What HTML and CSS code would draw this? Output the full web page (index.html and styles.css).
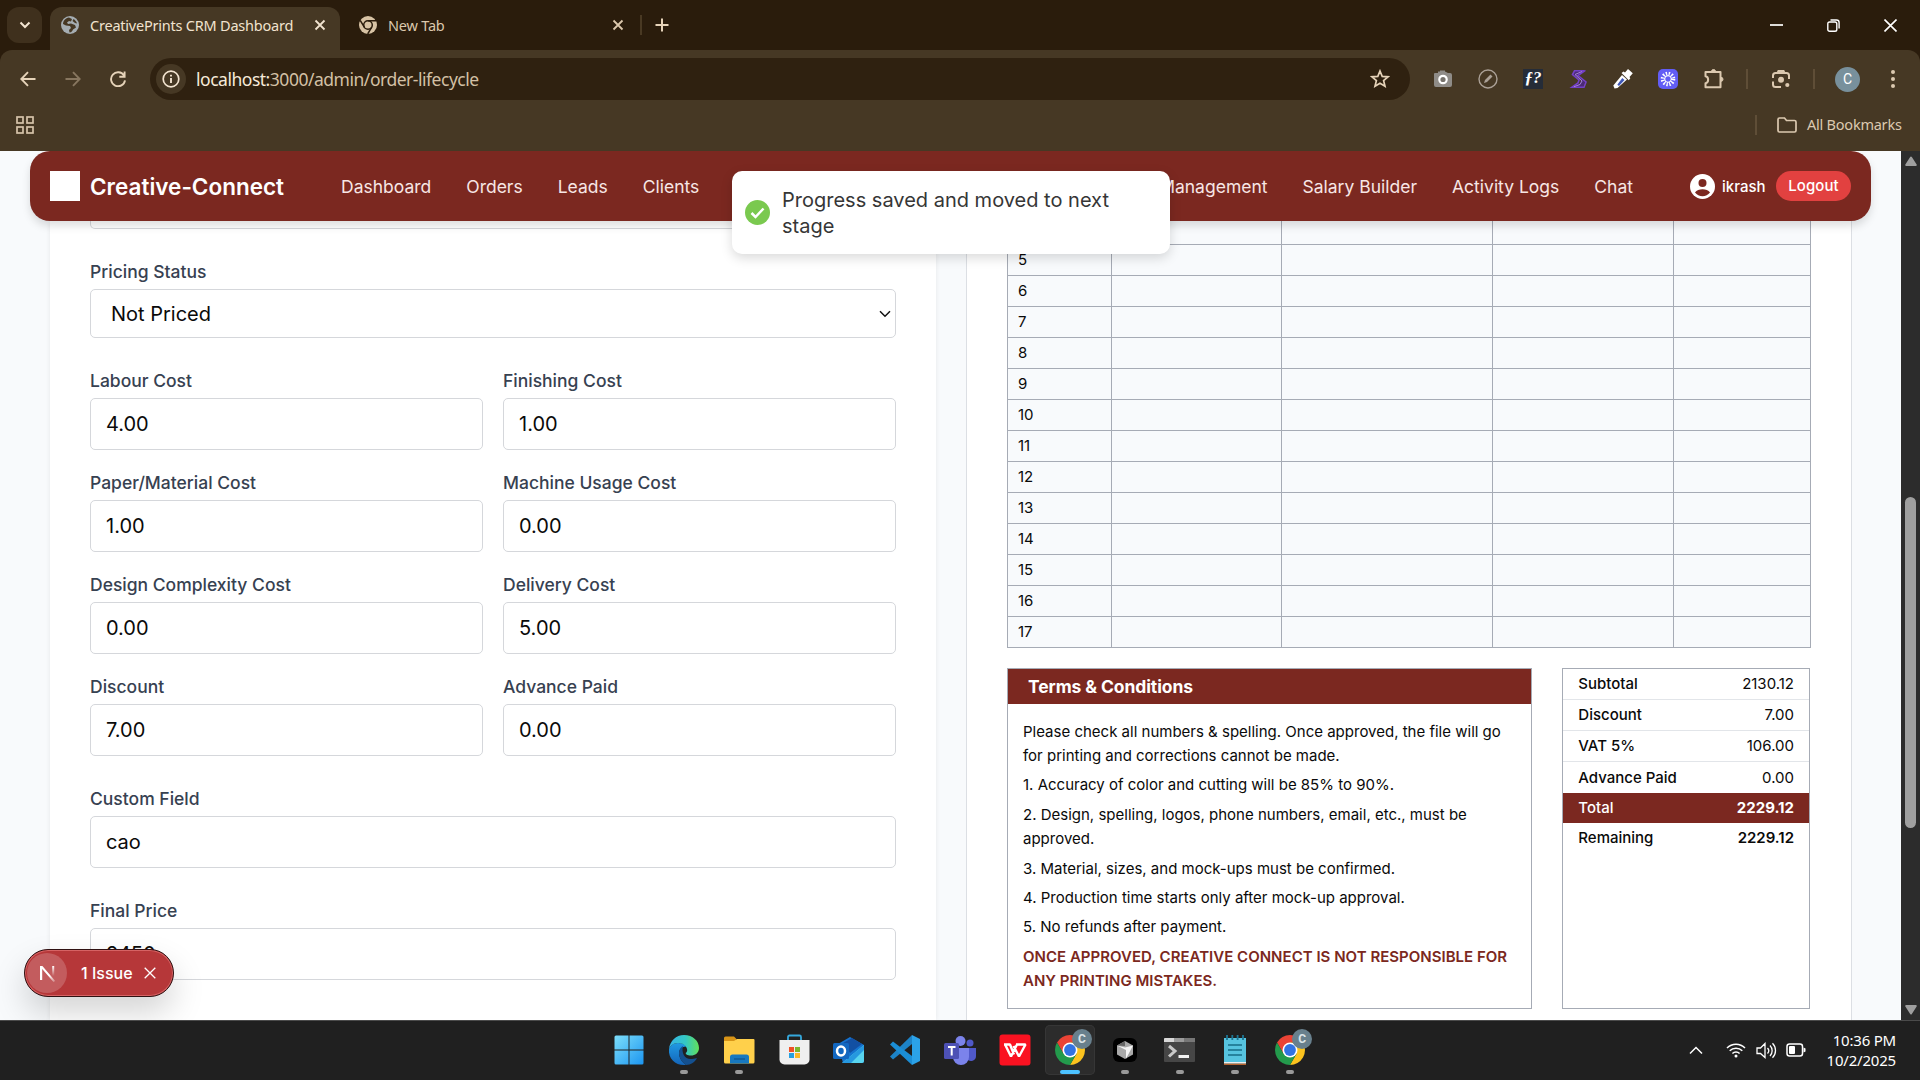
FILE: index.html
```html
<!DOCTYPE html>
<html lang="en">
<head>
<meta charset="utf-8">
<title>CreativePrints CRM Dashboard</title>
<link rel="stylesheet" href="styles.css">
</head>
<body>
<svg class="defs" width="0" height="0" aria-hidden="true">
  <symbol id="chrome-logo" viewBox="-15 -15 30 30">
    <path fill="#ea4335" d="M-12.99-7.5A15 15 0 0 1 12.99-7.5H0L-6.5 3.75Z"/>
    <path fill="#fcc31e" d="M12.99-7.5A15 15 0 0 1 0 15L6.5 3.75 0-7.5Z"/>
    <path fill="#239a4c" d="M0 15A15 15 0 0 1-12.99-7.5L-6.5 3.75H6.5Z"/>
    <circle r="7.5" fill="#fff"/><circle r="5.9" fill="#3273e3"/>
  </symbol>
  <symbol id="close" viewBox="0 0 12 12"><path d="M1.5 1.5l9 9M10.5 1.5l-9 9" fill="none" stroke="currentColor" stroke-width="1.8"/></symbol>
</svg>
<div class="screen">
  <div class="tabstrip">
    <div class="tab-search"><svg width="12" height="8" viewBox="0 0 12 8"><path d="M1.5 1.5L6 6l4.500-4.500" fill="none" stroke="#f3e4d0" stroke-width="2"/></svg></div>
    <div class="tab tab-active">
      <svg width="18" height="18" viewBox="0 0 18 18"><circle cx="9" cy="9" r="9" fill="#a5adb2"/><path d="M8 1.500c-3.500.5-6 3.500-6 6.500l3 1.500 4 .5 1 2-2 2 .5 2.500c2 0 3-1.500 3.500-3l3-2-1-2.500-4-1.500-3 .5-1-1.500 2-1.500 2 .5 1-2.500zM12.500 3l-1 2 2.500 2 2 .5C15.500 5.500 14 4 12.500 3z" fill="#463824"/></svg>
      <span class="tab-title">CreativePrints CRM Dashboard</span>
      <svg class="tab-x" width="12" height="12"><use href="#close"/></svg>
    </div>
    <div class="tab tab-idle">
      <svg width="18" height="18" viewBox="-9 -9 18 18"><circle r="9" fill="#d8c3a5"/><circle r="4.300" fill="none" stroke="#2a1c0c" stroke-width="1.500"/><path d="M0-4.300H8M3.700 2.200L-.3 9M-3.700 2.200L-7.800-4.700" stroke="#2a1c0c" stroke-width="1.500"/></svg>
      <span class="tab-title">New Tab</span>
      <svg class="tab-x" width="12" height="12"><use href="#close"/></svg>
    </div>
    <i class="tab-div"></i>
    <svg class="tab-plus" width="14" height="14" viewBox="0 0 14 14"><path d="M7 .5v13M.5 7h13" stroke="#e6d3b9" stroke-width="2"/></svg>
    <div class="win-btns">
      <svg width="13" height="13" viewBox="0 0 13 13"><path d="M0 6h13" stroke="#fff" stroke-width="1.700"/></svg>
      <svg width="13" height="13" viewBox="0 0 13 13" fill="none" stroke="#fff" stroke-width="1.400"><rect x=".8" y="3" width="9" height="9.200" rx="1.800"/><path d="M3.500 1h6a2.600 2.600 0 0 1 2.600 2.600v6"/></svg>
      <svg width="13" height="13" viewBox="0 0 13 13"><path d="M.5.5l12 12M12.500.5l-12 12" stroke="#fff" stroke-width="1.600"/></svg>
    </div>
  </div>

  <div class="toolbar">
    <svg class="nav-ico" width="16" height="16" viewBox="0 0 16 16" fill="none" stroke="#e6d3b9" stroke-width="1.900"><path d="M15.500 8H1.500M8 1.200L1.300 8 8 14.800"/></svg>
    <svg class="nav-ico" width="16" height="16" viewBox="0 0 16 16" fill="none" stroke="#87765f" stroke-width="1.900"><path d="M.5 8h14M8 1.200L14.700 8 8 14.800"/></svg>
    <svg class="nav-ico" width="16" height="16" viewBox="0 0 16 16" fill="none" stroke="#e6d3b9" stroke-width="1.900"><path d="M14 4.500A7 7 0 1 0 15 9.300M14.600.5v5.200H9.300"/></svg>
    <div class="omnibox">
      <span class="site-info"><svg width="18" height="18" viewBox="0 0 18 18"><circle cx="9" cy="9" r="7.800" fill="none" stroke="#f3e4d0" stroke-width="1.700"/><path d="M9 8v5M9 4.700v1.900" stroke="#f3e4d0" stroke-width="1.900"/></svg></span>
      <span class="url"><b>localhost:</b>3000/admin/order-lifecycle</span>
      <svg class="star" width="20" height="20" viewBox="0 0 20 20"><path d="M10 2l2.200 5.400 5.800.4-4.400 3.800 1.400 5.700L10 14.200l-5 3.100 1.400-5.700L2 7.800l5.800-.4z" fill="none" stroke="#e6d3b9" stroke-width="1.700"/></svg>
    </div>
    <div class="exts">
      <svg width="20" height="20" viewBox="0 0 20 20"><path d="M2 4h3V2.500h2V1.500h5v1l3 1.500h2a2 2 0 0 1 2 2V16a2 2 0 0 1-2 2H3a2 2 0 0 1-2-2V5a1 1 0 0 1 1-1z" fill="#8f8c88"/><circle cx="10" cy="10.500" r="3.700" fill="#77736d" stroke="#fff" stroke-width="2.200"/></svg>
      <svg width="20" height="20" viewBox="0 0 20 20"><circle cx="10" cy="10" r="9" fill="none" stroke="#aaa096" stroke-width="1.400"/><path d="M6 14l1-3 5.500-5.500 2 2L9 13z" fill="#aaa096"/></svg>
      <span class="fx">ƒ?</span>
      <svg width="20" height="20" viewBox="0 0 20 20" fill="none"><path d="M16.500 2H7L5 5l8 6-1 3-7 4h10l2-5-7-6z" fill="#4a2a78"/><path d="M16 1.800H6.500L4.500 5.500 11 11l-1 3-6 4.200h12L18 13 10 6.500 16.500 2z" stroke="#7440c8" stroke-width="1.600"/><path d="M14 2.500L7 5.500l7 6.500-2 3.500-6 2.200" stroke="#a884d8" stroke-width="1"/></svg>
      <svg width="20" height="20" viewBox="0 0 20 20"><path d="M1.500 19.500l-1.200-3L9 6l5 4.500L4.500 19z" fill="#fff"/><path d="M4.300 15.700L9.300 9l2.200 2-5.500 6z" fill="#4058b8"/><path d="M8.500 4l2-1.500 1.500 1 3-3.500L19.800 4.300 16.500 8l.8 1.200-1.500 2z" fill="#fff"/></svg>
      <svg width="20" height="20" viewBox="-10 -10 20 20"><rect x="-10" y="-10" width="20" height="20" rx="5" fill="#625df5"/><circle r="5.200" fill="none" stroke="#fff" stroke-width="4.200" stroke-dasharray="1.300 1.423"/><circle r="3.300" fill="none" stroke="#fff" stroke-width="1"/></svg>
      <svg width="22" height="22" viewBox="0 0 22 22" fill="none" stroke="#dcc9b0" stroke-width="2"><path d="M2.500 4H17.500v15.200H2.500v-4c3.500-.5 3.500-6.500 0-7z" stroke-linejoin="round"/><path d="M8.500 3.500a2 2 0 0 1 4 0zM18 9.300a2 2 0 0 1 0 4z" fill="#dcc9b0" stroke-width="1"/></svg>
    </div>
    <i class="bar-div"></i>
    <svg class="lens" width="20" height="20" viewBox="0 0 20 20" fill="none" stroke="#dcc9b0" stroke-width="2"><path d="M2 9V6.500A2.500 2.500 0 0 1 4.500 4H15.500A2.500 2.500 0 0 1 18 6.500V10M2 12.500v3A2.500 2.500 0 0 0 4.500 18H10M6.500 3l1-1h5l1 1"/><circle cx="10" cy="10.800" r="3" fill="#dcc9b0" stroke="none"/><circle cx="16.300" cy="16" r="2.100" fill="#dcc9b0" stroke="none"/></svg>
    <i class="bar-div bar-div2"></i>
    <span class="avatar">C</span>
    <svg class="dots" width="4" height="18" viewBox="0 0 4 18" fill="#dcc9b0"><circle cx="2" cy="2" r="2"/><circle cx="2" cy="9" r="2"/><circle cx="2" cy="16" r="2"/></svg>
  </div>

  <div class="bookmarks">
    <svg width="18" height="18" viewBox="0 0 18 18" fill="none" stroke="#d6c3aa" stroke-width="1.700"><rect x="1" y="1" width="6" height="6"/><rect x="11" y="1" width="6" height="6"/><rect x="1" y="11" width="6" height="6"/><rect x="11" y="11" width="6" height="6"/></svg>
    <i class="bar-div bm-div"></i>
    <svg class="folder" width="20" height="16" viewBox="0 0 20 16"><path d="M1 2.500A1.500 1.500 0 0 1 2.500 1H7.500l2 2.500h8A1.500 1.500 0 0 1 19 5v8.500a1.500 1.500 0 0 1-1.500 1.500h-15A1.500 1.500 0 0 1 1 13.500z" fill="none" stroke="#dcc9b0" stroke-width="1.700"/></svg>
    <span class="bm-text">All Bookmarks</span>
  </div>

  <div class="viewport">
    <div class="page">
      <header class="navbar">
        <span class="logo-box"></span>
        <span class="brand">Creative-Connect</span>
        <nav class="links"><a>Dashboard</a><a>Orders</a><a>Leads</a><a>Clients</a></nav>
        <nav class="links links-end"><a>Management</a><a>Salary Builder</a><a>Activity Logs</a><a>Chat</a></nav>
        <svg class="user-ico" width="25" height="25" viewBox="0 0 25 25"><circle cx="12.500" cy="12.500" r="12.500" fill="#fff"/><circle cx="12.500" cy="9" r="4" fill="#7b2820"/><path d="M5 18.500c1.500-2.300 4.500-3.300 7.500-3.300s6 1 7.500 3.300a9.500 9.500 0 0 1-15 0z" fill="#7b2820"/></svg>
        <span class="user">ikrash</span>
        <span class="logout">Logout</span>
      </header>

      <main class="columns">
        <section class="form-card">
          <div class="input cut"></div>
          <div class="field status"><label>Pricing Status</label><div class="input select">Not Priced<svg width="12" height="8" viewBox="0 0 12 8"><path d="M1 1.200l5 5 5-5" fill="none" stroke="#111" stroke-width="1.500"/></svg></div></div>
          <div class="costs">
            <div class="field"><label>Labour Cost</label><div class="input">4.00</div></div>
            <div class="field"><label>Finishing Cost</label><div class="input">1.00</div></div>
            <div class="field"><label>Paper/Material Cost</label><div class="input">1.00</div></div>
            <div class="field"><label>Machine Usage Cost</label><div class="input">0.00</div></div>
            <div class="field"><label>Design Complexity Cost</label><div class="input">0.00</div></div>
            <div class="field"><label>Delivery Cost</label><div class="input">5.00</div></div>
            <div class="field"><label>Discount</label><div class="input">7.00</div></div>
            <div class="field"><label>Advance Paid</label><div class="input">0.00</div></div>
          </div>
          <div class="field wide"><label>Custom Field</label><div class="input">cao</div></div>
          <div class="field wide"><label>Final Price</label><div class="input">2450</div></div>
        </section>

        <section class="quote-card">
          <table class="items">
            <colgroup><col class="c1"><col class="c2"><col class="c3"><col class="c4"><col class="c5"></colgroup>
            <tr class="partial"><td></td><td></td><td></td><td></td><td></td></tr>
            <tr><td>5</td><td></td><td></td><td></td><td></td></tr>
            <tr><td>6</td><td></td><td></td><td></td><td></td></tr>
            <tr><td>7</td><td></td><td></td><td></td><td></td></tr>
            <tr><td>8</td><td></td><td></td><td></td><td></td></tr>
            <tr><td>9</td><td></td><td></td><td></td><td></td></tr>
            <tr><td>10</td><td></td><td></td><td></td><td></td></tr>
            <tr><td>11</td><td></td><td></td><td></td><td></td></tr>
            <tr><td>12</td><td></td><td></td><td></td><td></td></tr>
            <tr><td>13</td><td></td><td></td><td></td><td></td></tr>
            <tr><td>14</td><td></td><td></td><td></td><td></td></tr>
            <tr><td>15</td><td></td><td></td><td></td><td></td></tr>
            <tr><td>16</td><td></td><td></td><td></td><td></td></tr>
            <tr><td>17</td><td></td><td></td><td></td><td></td></tr>
          </table>
          <div class="bottom">
            <div class="terms">
              <h3>Terms &amp; Conditions</h3>
              <div class="terms-body">
                <p>Please check all numbers &amp; spelling. Once approved, the file will go<br>for printing and corrections cannot be made.</p>
                <p>1. Accuracy of color and cutting will be 85% to 90%.</p>
                <p>2. Design, spelling, logos, phone numbers, email, etc., must be<br>approved.</p>
                <p>3. Material, sizes, and mock-ups must be confirmed.</p>
                <p>4. Production time starts only after mock-up approval.</p>
                <p>5. No refunds after payment.</p>
                <p class="warn">ONCE APPROVED, CREATIVE CONNECT IS NOT RESPONSIBLE FOR<br>ANY PRINTING MISTAKES.</p>
              </div>
            </div>
            <div class="totals">
              <div class="trow"><b>Subtotal</b><span>2130.12</span></div>
              <div class="trow"><b>Discount</b><span>7.00</span></div>
              <div class="trow"><b>VAT 5%</b><span>106.00</span></div>
              <div class="trow last"><b>Advance Paid</b><span>0.00</span></div>
              <div class="trow total"><b>Total</b><strong>2229.12</strong></div>
              <div class="trow remain"><b>Remaining</b><strong>2229.12</strong></div>
            </div>
          </div>
        </section>
      </main>

      <div class="toast">
        <svg width="25" height="25" viewBox="0 0 25 25"><circle cx="12.500" cy="12.500" r="12.500" fill="#7ac94f"/><path d="M6.500 13l4 4 8-8.500" fill="none" stroke="#fff" stroke-width="2.500"/></svg>
        <span>Progress saved and moved to next<br>stage</span>
      </div>
      <div class="issue">
        <span class="issue-n"><svg width="16" height="17" viewBox="0 0 16 17"><defs><linearGradient id="ng" x1="0" y1="0" x2="1" y2="1"><stop offset=".6" stop-color="#fff"/><stop offset="1" stop-color="#fff" stop-opacity=".2"/></linearGradient><linearGradient id="nv" x1="0" y1="0" x2="0" y2="1"><stop offset="0" stop-color="#fff"/><stop offset="1" stop-color="#fff" stop-opacity="0"/></linearGradient></defs><path d="M0 15V1h2.400L15.200 16l-1.700 1L2.200 4V15z" fill="url(#ng)"/><path d="M12.200 1h2v10h-2z" fill="url(#nv)"/></svg></span>
        <span class="issue-text">1 Issue</span>
        <svg width="12" height="12" viewBox="0 0 12 12"><path d="M.7.7l10.600 10.600M11.300.7L.7 11.300" stroke="#fff" stroke-width="1.300"/></svg>
      </div>
    </div>
    <div class="scrollbar">
      <svg width="12" height="11" viewBox="0 0 12 11"><path d="M6 1.500l4.800 7.500H1.200z" fill="#9f9f9f" stroke="#9f9f9f" stroke-width="2" stroke-linejoin="round"/></svg>
      <i class="thumb"></i>
      <svg width="12" height="11" viewBox="0 0 12 11"><path d="M6 9.500L1.200 2h9.600z" fill="#9f9f9f" stroke="#9f9f9f" stroke-width="2" stroke-linejoin="round"/></svg>
    </div>
  </div>

  <footer class="taskbar">
    <div class="apps">
      <span class="app"><svg width="30" height="30" viewBox="0 0 30 30"><defs><linearGradient id="win" gradientUnits="userSpaceOnUse" x1="0" y1="0" x2="30" y2="30"><stop offset="0" stop-color="#7fe0fb"/><stop offset="1" stop-color="#1a94f0"/></linearGradient></defs><path fill="url(#win)" d="M2 .5h12.500v14H.5V2A1.500 1.500 0 0 1 2 .5zM15.500.5H28A1.500 1.500 0 0 1 29.500 2v12.500h-14zM.5 15.500h14v14H2A1.500 1.500 0 0 1 .5 28zM15.500 15.500h14V28a1.500 1.500 0 0 1-1.500 1.500H15.500z"/></svg></span>
      <span class="app open"><svg width="32" height="32" viewBox="0 0 32 32"><defs><linearGradient id="e1"><stop offset="0" stop-color="#35b4e8"/><stop offset=".55" stop-color="#34c7c4"/><stop offset="1" stop-color="#62e05a"/></linearGradient><linearGradient id="e2" x1="0" y1="0" x2="0" y2="1"><stop offset="0" stop-color="#1f9ae4"/><stop offset="1" stop-color="#1464b8"/></linearGradient></defs><path fill="url(#e2)" d="M1 15C2 12 5.500 9 10 9c4 0 7 1.500 8 3.500-4 0-7 3-7 6.500 0 5 3 9 7 12C8 32 0 25 1 15z"/><path fill="#14508f" d="M11 19c0-4 2-6 4-7-2 7 2 14 9 13 2 0 4-1 5-1-2 4-6 7-11 7-4-3-7-7-7-12z"/><path fill="url(#e1)" d="M1 15C2 7 8 1 16 1c9 0 15 6 15 13 0 5-4 7.500-8 7.500s-5.300-1.500-5.300-2.500c1.300-.7 1.800-2.300 1.300-4-1-4-5-6-9-6-4.500 0-8 3-9 6z"/></svg></span>
      <span class="app open"><svg width="32" height="30" viewBox="0 0 32 30"><path d="M1 3a1.500 1.500 0 0 1 1.500-1.500H11L13.500 4v4H1z" fill="#d99517"/><path d="M1 6h10l3-2h16.500a1 1 0 0 1 1 1v22a1.500 1.500 0 0 1-1.500 1.500H2.500A1.500 1.500 0 0 1 1 27z" fill="#ffd04b"/><path d="M7 28.500V22a2.500 2.500 0 0 1 2.500-2.500h14A2.500 2.500 0 0 1 26 22v6.500z" fill="#1778bf"/><path d="M11 24h11" stroke="#0f5690" stroke-width="1.300"/></svg></span>
      <span class="app"><svg width="32" height="32" viewBox="0 0 32 32"><path d="M10 7V3a1.500 1.500 0 0 1 1.500-1.500h10A1.500 1.500 0 0 1 23 3v4" fill="none" stroke="#35a8dc" stroke-width="1.800"/><path d="M1.500 6h30v19.500a5 5 0 0 1-5 5h-20a5 5 0 0 1-5-5z" fill="#efefef"/><path d="M11 13h5v5h-5z" fill="#ef5126"/><path d="M17 13h5v5h-5z" fill="#7db72d"/><path d="M11 19h5v5h-5z" fill="#26a0e0"/><path d="M17 19h5v5h-5z" fill="#fbb928"/></svg></span>
      <span class="app"><svg width="32" height="32" viewBox="0 0 32 32"><path d="M5 10L17 3l14 8v16a2 2 0 0 1-2 2H10z" fill="#1573cf"/><path d="M10 9l9-5 10 6-12 9z" fill="#1250a3"/><path d="M31 11v16a2 2 0 0 1-2 2H9z" fill="#58d4ef"/><path d="M14 25l17-14v5L18 29H9z" fill="#2698df"/><rect y="9" width="16" height="16" rx="1.500" fill="#1267c0"/><ellipse cx="8" cy="17" rx="4" ry="4.500" fill="none" stroke="#fff" stroke-width="2.500"/></svg></span>
      <span class="app"><svg width="32" height="32" viewBox="0 0 32 32"><path d="M23 1v9L4 25.500l-3-3z" fill="#1d83c7"/><path d="M23 31v-9L4 7.500l-3 3z" fill="#1b8ed6"/><path d="M23 1l8 4v22l-8 4z" fill="#2ba2e8"/></svg></span>
      <span class="app"><svg width="32" height="32" viewBox="0 0 32 32"><circle cx="26" cy="9" r="3.500" fill="#5059c9"/><path d="M23 14h9v8a5 5 0 0 1-9 3z" fill="#5059c9"/><circle cx="16.500" cy="7" r="5" fill="#7b83eb"/><path d="M9 14h16v9a7.500 7.500 0 0 1-16 0z" fill="#7b83eb"/><rect y="9" width="15" height="16" rx="1.500" fill="#4d51b5"/><path d="M4 13h7.500M7.700 13v8.500" stroke="#fff" stroke-width="2"/></svg></span>
      <span class="app"><svg width="32" height="32" viewBox="0 0 32 32"><rect x=".5" y=".5" width="31" height="31" rx="3" fill="#fa1221"/><path d="M5 10.500h6L15 20.500M17 10.500h9.500L20 22.500 14.500 12M6.300 11L12 22.500 17.700 11" fill="none" stroke="#fff" stroke-width="2.400" stroke-linejoin="bevel"/></svg></span>
      <span class="app current"><svg width="30" height="30"><use href="#chrome-logo"/></svg><em>C</em></span>
      <span class="app open"><svg width="24" height="24" viewBox="0 0 24 24"><rect width="24" height="24" rx="6" fill="#000"/><path d="M12 3l8 4.500v9L12 21l-8-4.500v-9z" fill="#aaa"/><path d="M4 7.500l8 2 8-2-7 13.200V12z" fill="#f5f5f5"/><path d="M12 3v5L4 7.500z" fill="#666"/></svg></span>
      <span class="app open"><svg width="31" height="24" viewBox="0 0 31 24"><rect width="31" height="24" rx="1" fill="#464646"/><path d="M0 1a1 1 0 0 1 1-1h9v4H0z" fill="#d8d8d8"/><path d="M10 0h10v4H10z" fill="#9b9b9b"/><path d="M20 0h11v4H20z" fill="#777"/><path d="M5 8l6 5-6 5.500" fill="none" stroke="#c9c9c9" stroke-width="3"/><path d="M14.500 18.500H25" stroke="#f2f2f2" stroke-width="3"/></svg></span>
      <span class="app open"><svg width="24" height="32" viewBox="0 0 24 32"><path d="M1 4h22v26H1z" fill="#56c4e0"/><path d="M1 28h22v1.500H1z" fill="#eee"/><path d="M1 29.500h22V31H1z" fill="#b5622f"/><path d="M4 1v5M9.300 1v5M14.600 1v5M20 1v5" stroke="#1d7795" stroke-width="1.800"/><path d="M5 11h14M5 16h14M5 21h14" stroke="#176d88" stroke-width="1.700"/></svg></span>
      <span class="app open"><svg width="30" height="30"><use href="#chrome-logo"/></svg><em>C</em></span>
    </div>
    <div class="tray">
      <svg width="14" height="9" viewBox="0 0 14 9"><path d="M1 7.500l6-6 6 6" fill="none" stroke="#fff" stroke-width="1.500"/></svg>
      <svg class="wifi" width="20" height="16" viewBox="0 0 20 16" fill="none" stroke="#fff" stroke-width="1.500"><path d="M1 6a12.500 12.500 0 0 1 18 0M3.700 8.800a8.800 8.800 0 0 1 12.600 0M6.400 11.500a5 5 0 0 1 7.200 0"/><circle cx="10" cy="14" r="1.500" fill="#fff" stroke="none"/></svg>
      <svg class="vol" width="21" height="17" viewBox="0 0 21 17" fill="none" stroke="#fff" stroke-width="1.300"><path d="M1 6h3.500L9 1.500v14L4.500 11.500H1zM11.500 6a4 4 0 0 1 0 5.500M14 3.500a7.500 7.500 0 0 1 0 10.500M16.500 1.200c4 4 4 10.600 0 14.600"/></svg>
      <svg class="bat" width="20" height="14" viewBox="0 0 20 14"><rect x="1" y="1" width="15.500" height="12" rx="2.500" fill="none" stroke="#fff" stroke-width="1.500"/><rect x="3" y="3" width="6" height="8" rx="1" fill="#fff"/><path d="M17.500 4.500l2 1v3l-2 1z" fill="#fff"/></svg>
      <div class="clock">10:36 PM<br>10/2/2025</div>
    </div>
  </footer>
</div>
</body>
</html>
```
FILE: styles.css
```css
* { box-sizing: border-box; }
body { margin: 0; font-family: Inter, "Liberation Sans", sans-serif; }
.defs { display: block; position: absolute; }
svg { flex: none; }
.screen { width: 1920px; height: 1080px; display: flex; flex-direction: column; overflow: hidden; background: #2a1c0c; }

/* Browser frame */
.tabstrip { height: 50px; display: flex; align-items: center; background: #2a1c0c; color: #f1e3cf; font: 15px "Noto Sans", sans-serif; }
.tab-search { width: 35px; height: 36px; margin: 0 8px 0 7px; border-radius: 12px; background: #3f301d; display: flex; align-items: center; justify-content: center; }
.tab { display: flex; align-items: center; white-space: nowrap; }
.tab-active { width: 290px; height: 43px; align-self: flex-end; padding: 0 14px 7px 11px; border-radius: 12px 12px 0 0; background: #463824; }
.tab-title { margin-left: 11px; font-size: 14.500px; letter-spacing: -0.22px; }
.tab-x { margin-left: auto; }
.tab-idle { width: 285px; padding: 0 1px 0 19px; color: #dcc8ad; }
.tab-div { width: 2px; height: 20px; margin-left: 15px; background: #493923; }
.tab-plus { margin-left: 13px; }
.win-btns { margin-left: auto; padding-right: 23px; display: flex; gap: 44px; }

.toolbar { height: 58px; display: flex; align-items: center; padding-left: 20px; background: #463824; border-radius: 12px 12px 0 0; }
.nav-ico { margin-right: 29px; }
.omnibox { width: 1260px; height: 42px; margin-left: -5px; border-radius: 21px; background: #2f2110; display: flex; align-items: center; padding: 0 20px 0 6px; }
.site-info { width: 30px; height: 30px; border-radius: 15px; background: #463824; display: flex; align-items: center; justify-content: center; }
.url { margin-left: 10px; font: 17.500px "Noto Sans", sans-serif; letter-spacing: -0.48px; color: #d3c0a5; }
.url b { font-weight: 400; color: #f6ead9; }
.star { margin-left: auto; }
.exts { display: flex; align-items: center; gap: 25px; margin-left: 23px; }
.fx { width: 20px; height: 20px; background: #252c38; color: #fff; font: italic bold 17px/18px "Liberation Serif", serif; text-align: center; }
.bar-div { width: 2px; height: 20px; margin-left: 21px; background: #5f4e37; }
.lens { margin-left: 23px; }
.bar-div2 { margin-left: 22px; }
.avatar { width: 25px; height: 25px; margin-left: 20px; border-radius: 50%; background: #78909c; color: #fff; font: 14px/25px Roboto, sans-serif; text-align: center; }
.dots { margin-left: 31px; }
.bookmarks { height: 43px; display: flex; align-items: center; padding: 0 18px 9px 16px; background: #463824; color: #dcc9b0; }
.bm-div { margin-left: auto; }
.folder { margin-left: 20px; }
.bm-text { width: 95px; margin: -2px 0 0 10px; font: 14.500px "Noto Sans", sans-serif; letter-spacing: -0.23px; white-space: nowrap; }

/* Web page */
.viewport { height: 869px; display: flex; background: #f8fafc; position: relative; }
.page { width: 1901px; position: relative; overflow: hidden; }
.navbar { position: relative; height: 70px; margin: 0 30px; padding: 0 20px; display: flex; align-items: center; border-radius: 20px; background: #7b2820; color: #fff; box-shadow: 0 5px 8px rgba(0,0,0,.13); }
.logo-box { width: 30px; height: 30px; background: #fff; }
.brand { width: 194px; margin-left: 10px; font-size: 22.500px; font-weight: 600; white-space: nowrap; }
.links { display: flex; gap: 35px; margin-left: 57px; font-size: 17.500px; color: #f7e6e5; }
.links-end { margin-left: auto; }
.user-ico { margin-left: 57px; }
.user { width: 44px; margin-left: 7px; font-size: 15px; font-weight: 500; }
.logout { width: 75px; height: 30px; margin-left: 10px; border-radius: 15px; background: #e24140; font-size: 15px; line-height: 30px; font-weight: 500; text-align: center; letter-spacing: .1px; }

.columns { height: 799px; display: flex; gap: 30px; padding-left: 50px; overflow: hidden; }
.form-card { width: 886px; padding: 0 40px; background: #fff; box-shadow: 0 0 5px rgba(0,0,0,.08); }
.input { height: 52px; padding: 0 15px; border: 1px solid #d5d7db; border-radius: 5px; display: flex; align-items: center; font-size: 20px; color: #0a0a0a; }
.input.cut { height: 8px; border-top: 0; border-radius: 0 0 5px 5px; }
.field label { display: block; height: 20px; margin-bottom: 7px; font-size: 17.500px; line-height: 20px; font-weight: 500; color: #374151; }
.status { margin-top: 33px; }
.select { height: 49px; padding: 0 4px 0 20px; justify-content: space-between; }
.costs { display: grid; grid-template-columns: 393px 393px; gap: 23px 20px; margin-top: 33px; }
.wide { margin-top: 33px; }

.quote-card { width: 886px; padding: 0 41px 0 40px; background: #fff; border: solid #dcdfe4; border-width: 0 1px; }
.items { width: 803px; border-collapse: collapse; table-layout: fixed; background: #f8fafc; font-size: 15px; color: #0a0a0a; }
.items td { height: 31px; padding: 0 0 0 10px; border: 1px solid #a6abb5; line-height: 20px; }
.items .partial td { height: 23px; border-top: 0; }
.c1 { width: 104px; } .c2 { width: 170px; } .c3 { width: 211px; } .c4 { width: 181px; } .c5 { width: 137px; }
.bottom { height: 341px; margin-top: 20px; display: flex; gap: 30px; }
.terms { width: 526px; border: 1px solid #a6abb5; }
.terms h3 { height: 35px; margin: 0; padding-left: 20px; background: #7b2820; color: #fff; font-size: 17.500px; line-height: 36px; font-weight: 700; letter-spacing: -.1px; }
.terms-body { padding: 16px 15px 0; font-size: 15px; line-height: 24.400px; color: #0a0a0a; white-space: nowrap; }
.terms-body p { margin: 0 0 5px; }
.terms-body .warn { font-weight: 600; color: #7b2820; letter-spacing: .02px; }
.totals { width: 248px; border: 1px solid #a6abb5; font-size: 15px; color: #0a0a0a; }
.trow { height: 31px; padding: 0 15px; display: flex; align-items: center; justify-content: space-between; border-bottom: 1px solid #e2e5e9; }
.trow b { font-weight: 500; }
.trow strong { font-weight: 600; }
.trow.last { border: 0; }
.trow.total { height: 30px; border: 0; background: #7b2820; color: #fff; }
.trow.total strong { font-weight: 700; }
.trow.remain { height: 30px; border: 0; }

.toast { position: absolute; left: 732px; top: 20px; width: 438px; height: 83px; padding: 0 13px; display: flex; align-items: center; gap: 12px; border-radius: 10px; background: #fff; color: #363636; font-size: 20px; line-height: 26px; white-space: nowrap; box-shadow: 0 4px 12px rgba(0,0,0,.15); }
.issue { position: absolute; left: 24px; top: 798px; width: 150px; height: 48px; padding-left: 2px; display: flex; align-items: center; border: 1.500px solid #301112; border-radius: 24px; background: #b63739; box-shadow: inset 0 0 0 1px #d66364, 0 16px 32px rgba(0,0,0,.17); color: #fff; }
.issue-n { width: 40px; height: 40px; padding-left: 1px; border-radius: 20px; background: #c35c5e; display: flex; align-items: center; justify-content: center; }
.issue-text { width: 52px; margin: 0 11px 0 14px; font-size: 16px; font-weight: 500; white-space: nowrap; }
.scrollbar { width: 19px; background: #2c2c2c; display: flex; flex-direction: column; align-items: center; padding: 5px 0; }
.thumb { width: 11px; height: 331px; margin: 330px 0 auto; border-radius: 6px; background: #9f9f9f; }

/* Taskbar */
.taskbar { height: 60px; padding: 0 0 1px 604px; display: flex; align-items: center; border-top: 1px solid #4b4b4b; background: #202020; color: #fff; }
.apps { display: flex; gap: 5px; }
.app { position: relative; width: 50.100px; height: 50px; border-radius: 5px; display: flex; align-items: center; justify-content: center; }
.app.current { background: #2c2c2c; box-shadow: inset 0 0 0 1px #363636; }
.app.open::after, .app.current::after { content: ""; position: absolute; bottom: 1px; width: 8px; height: 4px; border-radius: 2px; background: #9a9a9a; }
.app.current::after { width: 20px; background: #4cc2ff; }
.app em { position: absolute; top: 4px; right: 3px; width: 20px; height: 20px; border-radius: 50%; background: #68808d; color: #dbe4e8; font: bold 12px/20px Roboto, sans-serif; text-align: center; }
.tray { margin-left: auto; display: flex; align-items: center; padding-right: 24px; }
.wifi { margin-left: 23px; }
.vol { margin-left: 10px; }
.bat { margin-left: 9px; }
.clock { width: 71px; margin-left: 19px; font: 15px/20px "Noto Sans", sans-serif; letter-spacing: -0.2px; text-align: right; white-space: nowrap; }
```
